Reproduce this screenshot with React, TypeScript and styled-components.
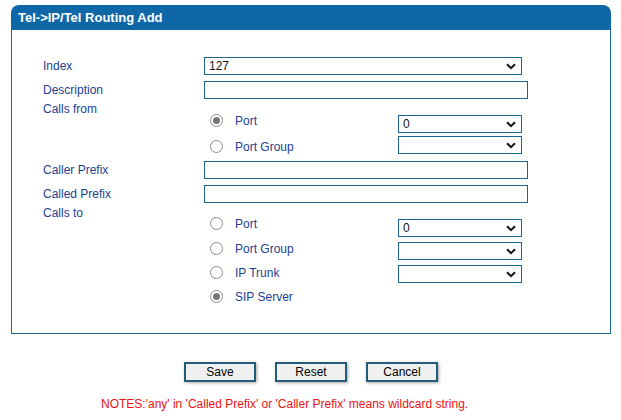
import React from "react";
import styled, { createGlobalStyle } from "styled-components";

const Global = createGlobalStyle`
  html, body { margin: 0; padding: 0; background: #ffffff; }
  body { font-family: "Liberation Sans", Arial, sans-serif; font-size: 12px; }
`;

const Page = styled.div`
  width: 621px;
  height: 420px;
  padding-top: 5px;
  box-sizing: border-box;
`;

const Panel = styled.div`
  width: 600px;
  margin-left: 11px;
`;

const Header = styled.div`
  height: 25px;
  background: #0f67a8;
  border-radius: 8px 8px 0 0;
  color: #ffffff;
  font-weight: bold;
  font-size: 13px;
  display: flex;
  align-items: center;
  padding-left: 7px;
  box-sizing: border-box;
`;

const Body = styled.div`
  border: 1px solid #1d6a96;
  border-top: none;
  padding: 24px 0 0 31px;
  height: 304px;
  box-sizing: border-box;
`;

const Row = styled.div<{ $h: number }>`
  display: grid;
  grid-template-columns: 161px 1fr;
  height: ${(p) => p.$h}px;
  align-items: center;
`;

const Label = styled.div`
  color: #1c3f94;
  font-size: 12px;
  line-height: 14px;
`;

const Group = styled.div<{ $bottom: number }>`
  display: grid;
  grid-template-columns: 161px 1fr;
  align-items: start;
  padding-bottom: ${(p) => p.$bottom}px;
`;

const SubRows = styled.div<{ $top: number }>`
  padding-top: ${(p) => p.$top}px;
  display: flex;
  flex-direction: column;
`;

const SubRow = styled.div<{ $h: number }>`
  height: ${(p) => p.$h}px;
  display: grid;
  grid-template-columns: 31px 163px 124px;
  align-items: center;
`;

const RadioCell = styled.div<{ $dy: number }>`
  display: flex;
  padding-left: 6px;
  transform: translateY(${(p) => p.$dy}px);
`;

const Radio = styled.span<{ $on?: boolean }>`
  width: 13px;
  height: 13px;
  border-radius: 50%;
  border: 1px solid #8d8d8d;
  background: #ffffff;
  box-sizing: border-box;
  display: flex;
  align-items: center;
  justify-content: center;
  &::after {
    content: "";
    width: 7px;
    height: 7px;
    border-radius: 50%;
    background: ${(p) => (p.$on ? "#777777" : "transparent")};
  }
`;

const OptLabel = styled(Label)<{ $dy: number }>`
  transform: translateY(${(p) => p.$dy}px);
`;

const SelectBox = styled.div<{ $w: number }>`
  position: relative;
  width: ${(p) => p.$w}px;
  height: 18px;
  border: 1px solid #1b6592;
  box-sizing: border-box;
  background: #ffffff;
  display: flex;
  align-items: center;
  padding-left: 4px;
  color: #111111;
  font-size: 12px;
`;

const Chevron = styled.svg`
  position: absolute;
  right: 5px;
  top: 5px;
`;

const TextInput = styled.input`
  width: 324px;
  height: 18px;
  border: 1px solid #1b6592;
  box-sizing: border-box;
  padding: 0 4px;
  font-family: inherit;
  font-size: 12px;
  outline: none;
`;

const Buttons = styled.div`
  display: flex;
  justify-content: center;
  gap: 19px;
  margin-top: 28px;
  padding-left: 1px;
`;

const Button = styled.button`
  width: 72px;
  height: 20px;
  background: #f0f0f0;
  border: 2px solid #235d7e;
  box-shadow: 1px 1px 3px rgba(0, 0, 0, 0.35);
  font-family: "Liberation Sans", Arial, sans-serif;
  font-size: 12px;
  color: #000000;
  padding: 0;
  box-sizing: border-box;
`;

const Notes = styled.div`
  margin-top: 15px;
  padding-left: 101px;
  color: #ee1111;
  font-size: 12px;
  line-height: 14px;
`;

const Select: React.FC<{ w: number; value?: string }> = ({ w, value }) => (
  <SelectBox $w={w}>
    {value}
    <Chevron width="10" height="7" viewBox="0 0 10 7">
      <path d="M1 1.2 L5 5.2 L9 1.2" fill="none" stroke="#111" strokeWidth="2" />
    </Chevron>
  </SelectBox>
);

type Opt = { label: string; on?: boolean; select?: string | null; h: number; dy: number };

const Options: React.FC<{ opts: Opt[] }> = ({ opts }) => (
  <>
    {opts.map((o) => (
      <SubRow key={o.label} $h={o.h}>
        <RadioCell $dy={o.dy}>
          <Radio $on={o.on} />
        </RadioCell>
        <OptLabel $dy={o.dy}>{o.label}</OptLabel>
        {o.select !== null ? <Select w={124} value={o.select} /> : <span />}
      </SubRow>
    ))}
  </>
);

export default function App() {
  return (
    <>
      <Global />
      <Page>
        <Panel>
          <Header>Tel-&gt;IP/Tel Routing Add</Header>
          <Body>
            <Row $h={24}>
              <Label>Index</Label>
              <Select w={318} value="127" />
            </Row>
            <Row $h={24}>
              <Label>Description</Label>
              <TextInput />
            </Row>
            <Group $bottom={3}>
              <Label>Calls from</Label>
              <SubRows $top={11}>
                <Options
                  opts={[
                    { label: "Port", on: true, select: "0", h: 21, dy: -3 },
                    { label: "Port Group", select: "", h: 21, dy: 2 },
                  ]}
                />
              </SubRows>
            </Group>
            <Row $h={24}>
              <Label>Caller Prefix</Label>
              <TextInput />
            </Row>
            <Row $h={24}>
              <Label>Called Prefix</Label>
              <TextInput />
            </Row>
            <Group $bottom={0}>
              <Label>Calls to</Label>
              <SubRows $top={10}>
                <Options
                  opts={[
                    { label: "Port", select: "0", h: 23, dy: -4 },
                    { label: "Port Group", select: "", h: 23, dy: -2 },
                    { label: "IP Trunk", select: "", h: 23, dy: -1 },
                    { label: "SIP Server", on: true, select: null, h: 23, dy: 0 },
                  ]}
                />
              </SubRows>
            </Group>
          </Body>
        </Panel>
        <Buttons>
          <Button>Save</Button>
          <Button>Reset</Button>
          <Button>Cancel</Button>
        </Buttons>
        <Notes>
          NOTES:'any' in 'Called Prefix' or 'Caller Prefix' means wildcard string.
        </Notes>
      </Page>
    </>
  );
}
